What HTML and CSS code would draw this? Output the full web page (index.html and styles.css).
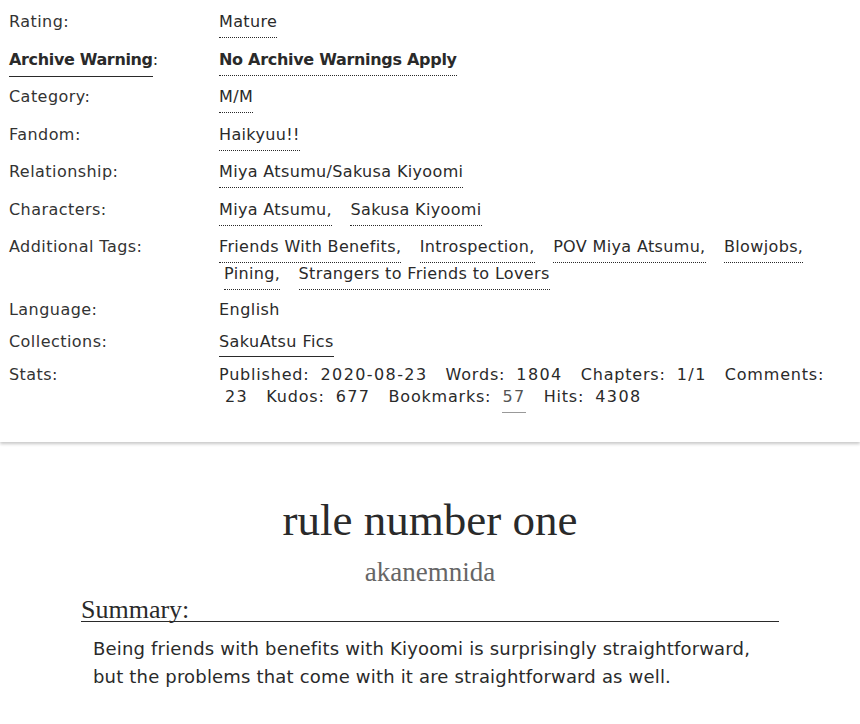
FILE: index.html
```html
<!DOCTYPE html>
<html lang="en">
<head>
<meta charset="utf-8">
<title>rule number one</title>
<link rel="stylesheet" href="styles.css">
</head>
<body>
<div class="wrapper">
  <dl class="meta">
    <dt>Rating:</dt>
    <dd><ul class="tags"><li><a class="tag">Mature</a></li></ul></dd>

    <dt class="strong"><a class="help">Archive Warning</a>:</dt>
    <dd><ul class="tags bold"><li><a class="tag">No Archive Warnings Apply</a></li></ul></dd>

    <dt>Category:</dt>
    <dd><ul class="tags"><li><a class="tag">M/M</a></li></ul></dd>

    <dt>Fandom:</dt>
    <dd><ul class="tags"><li><a class="tag">Haikyuu!!</a></li></ul></dd>

    <dt>Relationship:</dt>
    <dd><ul class="tags"><li><a class="tag">Miya Atsumu/Sakusa Kiyoomi</a></li></ul></dd>

    <dt>Characters:</dt>
    <dd><ul class="tags"><li><a class="tag">Miya Atsumu,</a></li> <li><a class="tag">Sakusa Kiyoomi</a></li></ul></dd>

    <dt>Additional Tags:</dt>
    <dd><ul class="tags"><li><a class="tag">Friends With Benefits,</a></li> <li><a class="tag">Introspection,</a></li> <li><a class="tag">POV Miya Atsumu,</a></li> <li><a class="tag">Blowjobs,</a></li> <li><a class="tag">Pining,</a></li> <li><a class="tag">Strangers to Friends to Lovers</a></li></ul></dd>

    <dt class="after-tags">Language:</dt>
    <dd class="after-tags">English</dd>

    <dt>Collections:</dt>
    <dd><a class="solid">SakuAtsu Fics</a></dd>

    <dt>Stats:</dt>
    <dd>
      <dl class="stats">
        <dt>Published:</dt> <dd>2020-08-23</dd>
        <dt>Words:</dt> <dd>1804</dd>
        <dt>Chapters:</dt> <dd>1/1</dd>
        <dt>Comments:</dt> <dd>23</dd>
        <dt>Kudos:</dt> <dd>677</dd>
        <dt>Bookmarks:</dt> <dd><a class="grey">57</a></dd>
        <dt>Hits:</dt> <dd>4308</dd>
      </dl>
    </dd>
  </dl>
</div>

<div class="preface">
  <h2 class="title">rule number one</h2>
  <h3 class="byline">akanemnida</h3>
  <div class="summary">
    <h3 class="heading">Summary:</h3>
    <blockquote class="userstuff">
      <p>Being friends with benefits with Kiyoomi is surprisingly straightforward, but the problems that come with it are straightforward as well.</p>
    </blockquote>
  </div>
</div>
</body>
</html>
```

FILE: styles.css
```css
html, body {
  margin: 0;
  padding: 0;
  background: #fff;
}

body {
  font-family: "DejaVu Sans", Verdana, sans-serif;
  font-size: 16px;
  color: #2a2a2a;
}

a {
  color: #2a2a2a;
  text-decoration: none;
}

.wrapper {
  background: #fff;
  padding: 11px 30px 34px 9px;
  box-shadow: 0 2px 3px rgba(0, 0, 0, 0.22);
}

.meta {
  display: grid;
  grid-template-columns: 210px 1fr;
  row-gap: 10.5px;
  margin: 0;
  line-height: 22px;
  letter-spacing: 0.45px;
}

.meta > dt {
  margin: 0;
  color: #333;
}

.meta > dt.strong {
  color: #2a2a2a;
}

.meta > .after-tags {
  margin-top: -2px;
}

.help {
  font-weight: bold;
  letter-spacing: -0.35px;
  border-bottom: 1px solid #2a2a2a;
  padding-bottom: 7px;
}

.meta > dd {
  margin: 0;
}

.tags {
  list-style: none;
  margin: 0;
  padding: 0;
  letter-spacing: 0.35px;
}

.tags li {
  display: inline;
}

.tags li + li {
  margin-left: 5px;
}

.tags li .tag {
  display: inline-block;
  padding-bottom: 4px;
  border-bottom: 1px dotted #2a2a2a;
  margin-right: 8px;
}

.tags.bold .tag {
  font-weight: bold;
  letter-spacing: -0.3px;
}

.solid {
  border-bottom: 1px solid #2a2a2a;
  padding-bottom: 5px;
}

.stats {
  margin: 0;
  display: inline;
  letter-spacing: 0;
}

.stats dt,
.stats dd {
  display: inline;
  margin: 0;
}

.stats dt {
  margin-left: 13px;
  letter-spacing: 0.8px;
}

.stats dt:first-child {
  margin-left: 0;
}

.stats dd {
  margin-left: 6px;
  letter-spacing: 1.4px;
}

.grey {
  color: #555;
  border-bottom: 1px solid #999;
  padding-bottom: 6px;
}

.preface {
  padding: 0 81px;
}

.title {
  font-family: "Liberation Serif", "Times New Roman", serif;
  font-weight: normal;
  font-size: 45px;
  line-height: 52px;
  text-align: center;
  color: #2a2a2a;
  margin: 52px 0 0;
}

.byline {
  font-family: "Liberation Serif", "Times New Roman", serif;
  font-weight: normal;
  font-size: 27px;
  line-height: 32px;
  text-align: center;
  color: #666;
  margin: 10px 0 0;
}

.summary {
  margin-top: 11px;
}

.heading {
  font-family: "Liberation Serif", "Times New Roman", serif;
  font-weight: normal;
  font-size: 26px;
  line-height: 22px;
  color: #2a2a2a;
  margin: 0;
  border-bottom: 1px solid #2a2a2a;
  padding-bottom: 0;
}

.userstuff {
  margin: 0;
  padding: 13px 12px 0;
}

.userstuff p {
  margin: 0;
  font-size: 18px;
  line-height: 28px;
  letter-spacing: 0.18px;
  color: #2a2a2a;
}
```
